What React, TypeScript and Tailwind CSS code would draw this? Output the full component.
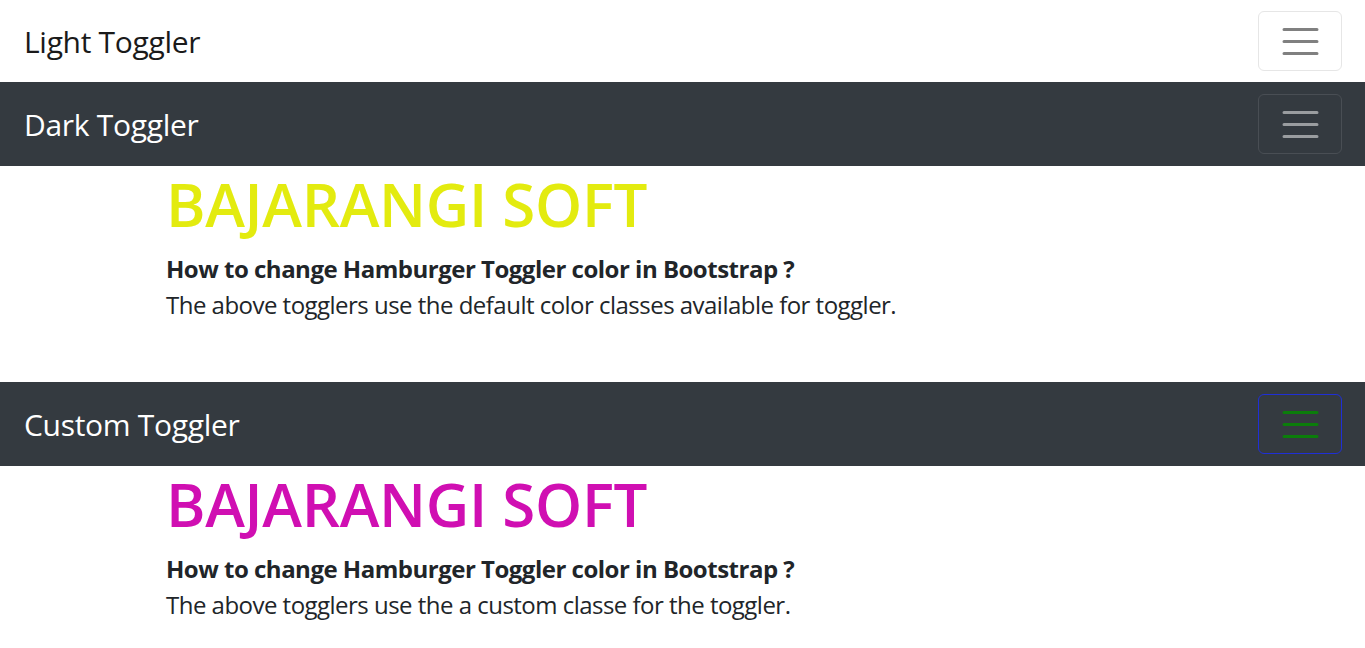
import React from 'react';

type Variant = 'light' | 'dark' | 'custom';

const togglerStyles: Record<Variant, { bar: string; border: string; text: string; stroke: string }> = {
  light: { bar: 'bg-white', border: 'border-[#e6e6e6]', text: 'text-[#1a1a1a]', stroke: '#808080' },
  dark: { bar: 'bg-[#343a40]', border: 'border-[#494e54]', text: 'text-white', stroke: '#9a9da0' },
  custom: { bar: 'bg-[#343a40]', border: 'border-[#1f2fd6]', text: 'text-white', stroke: '#0b7d0b' },
};

const HamburgerIcon = ({ color }: { color: string }) => (
  <svg width="45" height="45" viewBox="0 0 30 30" fill="none">
    <path d="M4 7h22M4 15h22M4 23h22" stroke={color} strokeWidth="2" strokeLinecap="round" strokeMiterlimit="10" />
  </svg>
);

const Navbar = ({ label, variant, height }: { label: string; variant: Variant; height: string }) => {
  const s = togglerStyles[variant];
  return (
    <nav className={`${s.bar} ${height} flex items-center justify-between pl-6 pr-[23px]`}>
      <span className={`${s.text} text-[30px] leading-[45px] tracking-[-0.3px]`}>{label}</span>
      <button className={`w-[84px] h-[60px] rounded-[6px] border ${s.border} flex items-center justify-center`}>
        <HamburgerIcon color={s.stroke} />
      </button>
    </nav>
  );
};

const Intro = ({ color, text }: { color: string; text: string }) => (
  <div className="pl-[166px] text-[#212529]">
    <h1 className={`${color} text-[60px] leading-[72px] pt-[2px] font-semibold tracking-[-0.3px]`}>BAJARANGI SOFT</h1>
    <h6 className="mt-[14px] text-[24px] leading-[30px] font-bold tracking-[-0.5px]">How to change Hamburger Toggler color in Bootstrap ?</h6>
    <p className="mt-[4px] text-[24px] leading-[34px] tracking-[-0.52px]">{text}</p>
  </div>
);

export default function App() {
  return (
    <div className="w-[1365px] h-[648px] overflow-hidden bg-white" style={{ fontFamily: '"Open Sans", "Noto Sans", sans-serif' }}>
      <Navbar label="Light Toggler" variant="light" height="h-[82px]" />
      <Navbar label="Dark Toggler" variant="dark" height="h-[84px]" />
      <div className="h-[216px]">
        <Intro color="text-[#e3eb0f]" text="The above togglers use the default color classes available for toggler." />
      </div>
      <Navbar label="Custom Toggler" variant="custom" height="h-[84px]" />
      <Intro color="text-[#d00fb2]" text="The above togglers use the a custom classe for the toggler." />
    </div>
  );
}
